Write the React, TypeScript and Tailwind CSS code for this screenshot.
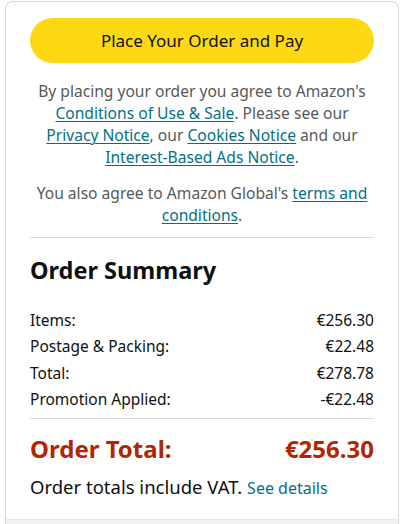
import React from 'react';

const Link: React.FC<{ children: React.ReactNode; nowrap?: boolean }> = ({ children, nowrap }) => (
  <a
    href="#"
    className={nowrap ? 'text-[#007185] underline underline-offset-2 decoration-1 whitespace-nowrap' : 'text-[#007185] underline underline-offset-2 decoration-1'}
  >
    {children}
  </a>
);

const SummaryRow: React.FC<{ label: string; value: string }> = ({ label, value }) => (
  <div className="flex justify-between items-center h-[26.5px]">
    <span>{label}</span>
    <span>{value}</span>
  </div>
);

export default function App() {
  return (
    <div className="w-[403px] h-[524px] bg-white pl-[5px] pr-[4px] pt-[1px] overflow-hidden" style={{ fontFamily: '"Noto Sans", Arial, sans-serif' }}>
      <div className="border border-[#d5d9d9] rounded-t-lg h-[540px] flex flex-col">
        <div className="px-6 pt-[16px] pb-[19px]">
          {/* Place order button */}
          <button className="w-full h-[45px] rounded-full bg-[#ffd814] text-[#0f1111] text-[17px] flex items-center justify-center">
            Place Your Order and Pay
          </button>

          <p className="mt-[17px] text-center text-[15.6px] leading-[22px] text-[#565959] px-[4px]">
            By placing your order you agree to Amazon's{' '}
            <Link nowrap>Conditions of Use &amp; Sale</Link>. Please see our{' '}
            <Link nowrap>Privacy Notice</Link>, our <Link nowrap>Cookies Notice</Link> and our{' '}
            <Link nowrap>Interest-Based Ads Notice</Link>.
          </p>

          <p className="mt-[14px] text-center text-[15.6px] leading-[22px] text-[#565959] px-[4px]">
            You also agree to Amazon Global's <Link>terms and conditions</Link>.
          </p>

          <div className="mt-[11px] border-t border-[#d5d9d9]" />

          <h2 className="mt-[18px] text-[23.5px] font-bold text-[#0f1111] leading-[28px]">Order Summary</h2>

          <div className="mt-[23px] text-[15.5px] text-[#0f1111]">
            <SummaryRow label="Items:" value="€256.30" />
            <SummaryRow label="Postage & Packing:" value="€22.48" />
            <SummaryRow label="Total:" value="€278.78" />
            <SummaryRow label="Promotion Applied:" value="-€22.48" />
          </div>

          <div className="mt-[5px] border-t border-[#d5d9d9]" />

          <div className="mt-[16px] flex justify-between items-center text-[24px] font-bold text-[#b12704] leading-[28px]">
            <span>Order Total:</span>
            <span>€256.30</span>
          </div>

          <p className="mt-[12px] text-[18.5px] text-[#0f1111] leading-[24px]">
            Order totals include VAT.{' '}
            <a href="#" className="text-[16px] text-[#007185]">See details</a>
          </p>
        </div>
        <div className="flex-1 bg-[#f0f2f2] border-t border-[#e7e9e9]" />
      </div>
    </div>
  );
}
